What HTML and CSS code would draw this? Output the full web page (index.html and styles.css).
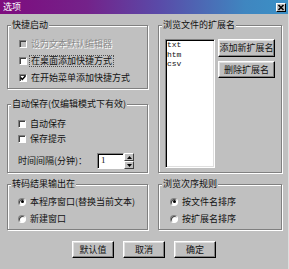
FILE: index.html
```html
<!DOCTYPE html>
<html lang="zh-CN">
<head>
<meta charset="utf-8">
<title>选项</title>
<link rel="stylesheet" href="styles.css">
</head>
<body>
<div class="window">
  <div class="titlebar">
    <span class="title">选项</span>
    <span class="close"><svg width="8" height="7" viewBox="0 0 8 7"><path d="M1.5 1 L6.5 6 M6.5 1 L1.5 6" stroke="#000" stroke-width="1.6"/></svg></span>
  </div>
  <div class="main">
    <div class="left-col">
      <div class="group g1">
        <div class="legend">快捷启动</div>
        <div class="body">
          <div class="row disabled"><span class="cb"></span><span class="lbl">设为文本默认编辑器</span></div>
          <div class="row"><span class="cb"></span><span class="lbl focus">在桌面添加快捷方式</span></div>
          <div class="row"><span class="cb"><svg width="6" height="6" viewBox="0 0 6 6"><path d="M0.6 2.6 L2.3 4.4 L5.4 1" fill="none" stroke="#000" stroke-width="1.5"/></svg></span><span class="lbl">在开始菜单添加快捷方式</span></div>
        </div>
      </div>
      <div class="group g2">
        <div class="legend">自动保存(仅编辑模式下有效)</div>
        <div class="body">
          <div class="row r15"><span class="cb"></span><span class="lbl">自动保存</span></div>
          <div class="row r15"><span class="cb"></span><span class="lbl">保存提示</span></div>
          <div class="time-row">
            <span class="time-lbl">时间间隔(分钟)：</span>
            <span class="spin-input">1</span>
            <span class="spin">
              <span class="spin-btn"><svg width="5" height="3" viewBox="0 0 5 3"><path d="M0 3 L2.5 0 L5 3 Z" fill="#000"/></svg></span>
              <span class="spin-btn"><svg width="5" height="3" viewBox="0 0 5 3"><path d="M0 0 L5 0 L2.5 3 Z" fill="#000"/></svg></span>
            </span>
          </div>
        </div>
      </div>
    </div>
    <div class="group r1">
      <div class="legend">浏览文件的扩展名</div>
      <div class="body ext-body">
        <div class="listbox">
          <div>txt</div>
          <div>htm</div>
          <div>csv</div>
        </div>
        <div class="ext-buttons">
          <span class="btn btn-add">添加新扩展名</span>
          <span class="btn btn-del">删除扩展名</span>
        </div>
      </div>
    </div>
    <div class="group g3">
      <div class="legend">转码结果输出在</div>
      <div class="body">
        <div class="row"><span class="radio on"></span><span class="lbl">本程序窗口(替换当前文本)</span></div>
        <div class="row"><span class="radio"></span><span class="lbl">新建窗口</span></div>
      </div>
    </div>
    <div class="group r2">
      <div class="legend">浏览次序规则</div>
      <div class="body">
        <div class="row"><span class="radio on"></span><span class="lbl">按文件名排序</span></div>
        <div class="row"><span class="radio"></span><span class="lbl">按扩展名排序</span></div>
      </div>
    </div>
  </div>
  <div class="buttons">
    <span class="btn dlg">默认值</span>
    <span class="btn dlg">取消</span>
    <span class="btn dlg">确定</span>
  </div>
</div>
</body>
</html>
```

FILE: styles.css
```css
* { box-sizing: border-box; }
html, body { margin: 0; padding: 0; }
body {
  background: #c0c0c0;
  font-family: "Noto Sans CJK SC", "Liberation Sans", sans-serif;
  font-size: 9px;
  color: #111;
}
.window {
  width: 289px;
  height: 269px;
  overflow: hidden;
  background: #c0c0c0;
  border-right: 1px solid #dfdfdf;
}
.titlebar {
  height: 14px;
  display: flex;
  align-items: center;
  justify-content: space-between;
  padding: 0 2px 0 3px;
  background: linear-gradient(90deg, #7e0c7e 0%, #74228a 30%, #5a4aa8 55%, #3f86c0 85%, #3b90c6 100%);
}
.title {
  color: #fff;
  line-height: 12px;
}
.close {
  width: 10px;
  height: 9px;
  background: #c0c0c0;
  border: 1px solid;
  border-color: #fff #000 #000 #fff;
  display: flex;
  align-items: center;
  justify-content: center;
}
.close svg { display: block; }
.main {
  display: grid;
  grid-template-columns: 141px 124px;
  grid-template-rows: 148px 46px;
  column-gap: 10px;
  row-gap: 11px;
  padding: 11px 0 0 7px;
}
.left-col {
  display: flex;
  flex-direction: column;
  gap: 15px;
}
.group {
  border: 1px solid #808080;
  box-shadow: inset 1px 1px 0 #fff, 1px 1px 0 #fff;
}
.g1 { height: 64px; }
.g2 { height: 69px; }
.legend {
  width: fit-content;
  margin: -7px 0 0 3px;
  padding: 0 1px;
  height: 12px;
  line-height: 12px;
  background: #c0c0c0;
  white-space: nowrap;
}
.body { padding: 4px 0 0 11px; }
.g2 .body { padding: 6px 0 0 10px; }
.g3 .body { padding: 3px 0 0 10px; }
.r2 .body { padding: 3px 0 0 11px; }
.row {
  height: 17px;
  display: flex;
  align-items: center;
  white-space: nowrap;
}
.row.r15 { height: 15px; }
.lbl {
  margin-left: 4px;
  line-height: 10px;
}
.lbl.focus {
  margin-left: 3px;
  padding: 0 1px;
  outline: 1px dotted #505050;
}
.cb {
  width: 8px;
  height: 8px;
  flex: none;
  background: #fff;
  border: 1px solid;
  border-color: #808080 #fff #fff #808080;
  box-shadow: inset 1px 1px 0 #404040;
  display: flex;
  align-items: center;
  justify-content: center;
}
.cb svg { display: block; }
.disabled .cb { background: #c0c0c0; }
.disabled .lbl {
  color: #8a8a8a;
  text-shadow: 1px 1px 0 #fff;
}
.radio {
  width: 8px;
  height: 8px;
  flex: none;
  border-radius: 50%;
  background: #fff;
  border: 1px solid;
  border-color: #808080 #fff #fff #808080;
  box-shadow: inset 1px 1px 0 #404040;
  display: flex;
  align-items: center;
  justify-content: center;
}
.radio.on::after {
  content: "";
  width: 3px;
  height: 3px;
  border-radius: 50%;
  background: #000;
}
.time-row {
  display: flex;
  align-items: center;
  margin-top: 7px;
  height: 16px;
}
.time-lbl {
  width: 79px;
  white-space: nowrap;
  line-height: 10px;
}
.spin-input {
  width: 27px;
  height: 16px;
  background: #fff;
  border: 1px solid;
  border-color: #808080 #fff #fff #808080;
  box-shadow: inset 1px 1px 0 #000;
  padding-left: 3px;
  line-height: 13px;
  font-family: "Liberation Serif", serif;
  font-size: 9px;
}
.spin {
  width: 10px;
  height: 16px;
  display: flex;
  flex-direction: column;
}
.spin-btn {
  flex: 1;
  background: #c0c0c0;
  border: 1px solid;
  border-color: #fff #404040 #404040 #fff;
  display: flex;
  align-items: center;
  justify-content: center;
}
.spin-btn svg { display: block; }
.ext-body {
  display: flex;
  align-items: flex-start;
  padding: 8px 0 0 6px;
}
.listbox {
  width: 50px;
  height: 129px;
  background: #fff;
  border: 1px solid;
  border-color: #808080 #fff #fff #808080;
  box-shadow: inset 1px 1px 0 #000, inset -1px -1px 0 #dfdfdf;
  padding-left: 1px;
  font-family: "Liberation Mono", monospace;
  font-size: 8px;
  line-height: 9.5px;
}
.ext-buttons {
  display: flex;
  flex-direction: column;
  margin-left: 3px;
  gap: 4px;
}
.btn {
  display: flex;
  align-items: center;
  justify-content: center;
  background: #c0c0c0;
  border: 1px solid;
  border-color: #fff #000 #000 #fff;
  box-shadow: inset -1px -1px 0 #808080, inset 1px 1px 0 #dfdfdf;
  white-space: nowrap;
  line-height: 10px;
}
.btn-add { width: 57px; height: 18px; }
.btn-del { width: 57px; height: 17px; }
.buttons {
  display: flex;
  justify-content: center;
  gap: 9px;
  margin-top: 11px;
}
.btn.dlg {
  width: 42px;
  height: 17px;
}
```
